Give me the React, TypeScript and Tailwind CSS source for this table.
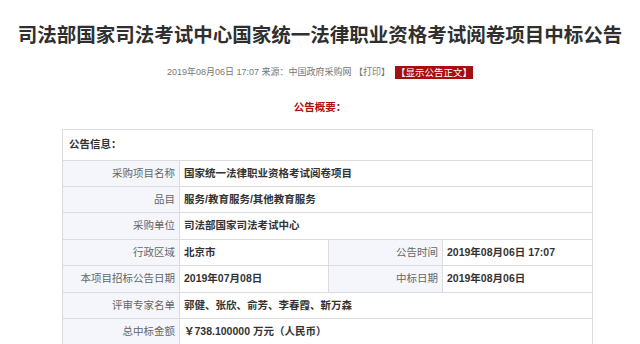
const font = "font-['Liberation_Sans','Noto_Sans_CJK_SC',sans-serif]";

function Label({ children, w }: { children: React.ReactNode; w: string }) {
  return (
    <div className={`${w} shrink-0 h-full bg-[#f4f6fb] border-r border-[#dcdcdc] flex items-center justify-end pr-[4px] text-[#666]`}>
      {children}
    </div>
  );
}

function Value({ children, w }: { children: React.ReactNode; w?: string }) {
  return (
    <div className={`${w ?? 'flex-1'} h-full flex items-center pl-[4px] font-bold text-[#333]`}>
      {children}
    </div>
  );
}

export default function App() {
  return (
    <div className={`w-[640px] h-[344px] overflow-hidden bg-white ${font}`}>
      <h1 className="pt-[21px] text-center text-[19.5px] leading-[28px] font-bold text-[#2f2f2f] whitespace-nowrap">
        司法部国家司法考试中心国家统一法律职业资格考试阅卷项目中标公告
      </h1>

      <div className="mt-[16px] flex justify-center items-center text-[9px] leading-[14px] text-[#777] whitespace-nowrap">
        <span>2019年08月06日 17:07 来源：中国政府采购网 【打印】</span>
        <span className="ml-[5px] bg-[#a50f0f] text-white px-[1px] leading-[13px] text-[9.5px]">【显示公告正文】</span>
      </div>

      <div className="mt-[21px] text-center text-[10.5px] leading-[14px] font-bold text-[#a11]">公告概要：</div>

      <div className="mt-[15px] ml-[62px] w-[531px] border border-[#dcdcdc] text-[10.5px]">
        <div className="h-[31px] border-b border-[#dcdcdc] flex items-center pl-[6px] font-bold text-[#333]">公告信息：</div>

        <div className="h-[26px] border-b border-[#dcdcdc] flex">
          <Label w="w-[117px]">采购项目名称</Label>
          <Value>国家统一法律职业资格考试阅卷项目</Value>
        </div>
        <div className="h-[26px] border-b border-[#dcdcdc] flex">
          <Label w="w-[117px]">品目</Label>
          <Value>服务/教育服务/其他教育服务</Value>
        </div>
        <div className="h-[27px] border-b border-[#dcdcdc] flex">
          <Label w="w-[117px]">采购单位</Label>
          <Value>司法部国家司法考试中心</Value>
        </div>
        <div className="h-[26px] border-b border-[#dcdcdc] flex">
          <Label w="w-[117px]">行政区域</Label>
          <Value w="w-[149px] border-r border-[#dcdcdc]">北京市</Value>
          <Label w="w-[114px]">公告时间</Label>
          <Value>2019年08月06日 17:07</Value>
        </div>
        <div className="h-[27px] border-b border-[#dcdcdc] flex">
          <Label w="w-[117px]">本项目招标公告日期</Label>
          <Value w="w-[149px] border-r border-[#dcdcdc]">2019年07月08日</Value>
          <Label w="w-[114px]">中标日期</Label>
          <Value>2019年08月06日</Value>
        </div>
        <div className="h-[26px] border-b border-[#dcdcdc] flex">
          <Label w="w-[117px]">评审专家名单</Label>
          <Value>郭健、张欣、俞芳、李春霞、靳万森</Value>
        </div>
        <div className="h-[26px] border-b border-[#dcdcdc] flex">
          <Label w="w-[117px]">总中标金额</Label>
          <Value>￥738.100000 万元（人民币）</Value>
        </div>
      </div>
    </div>
  );
}
